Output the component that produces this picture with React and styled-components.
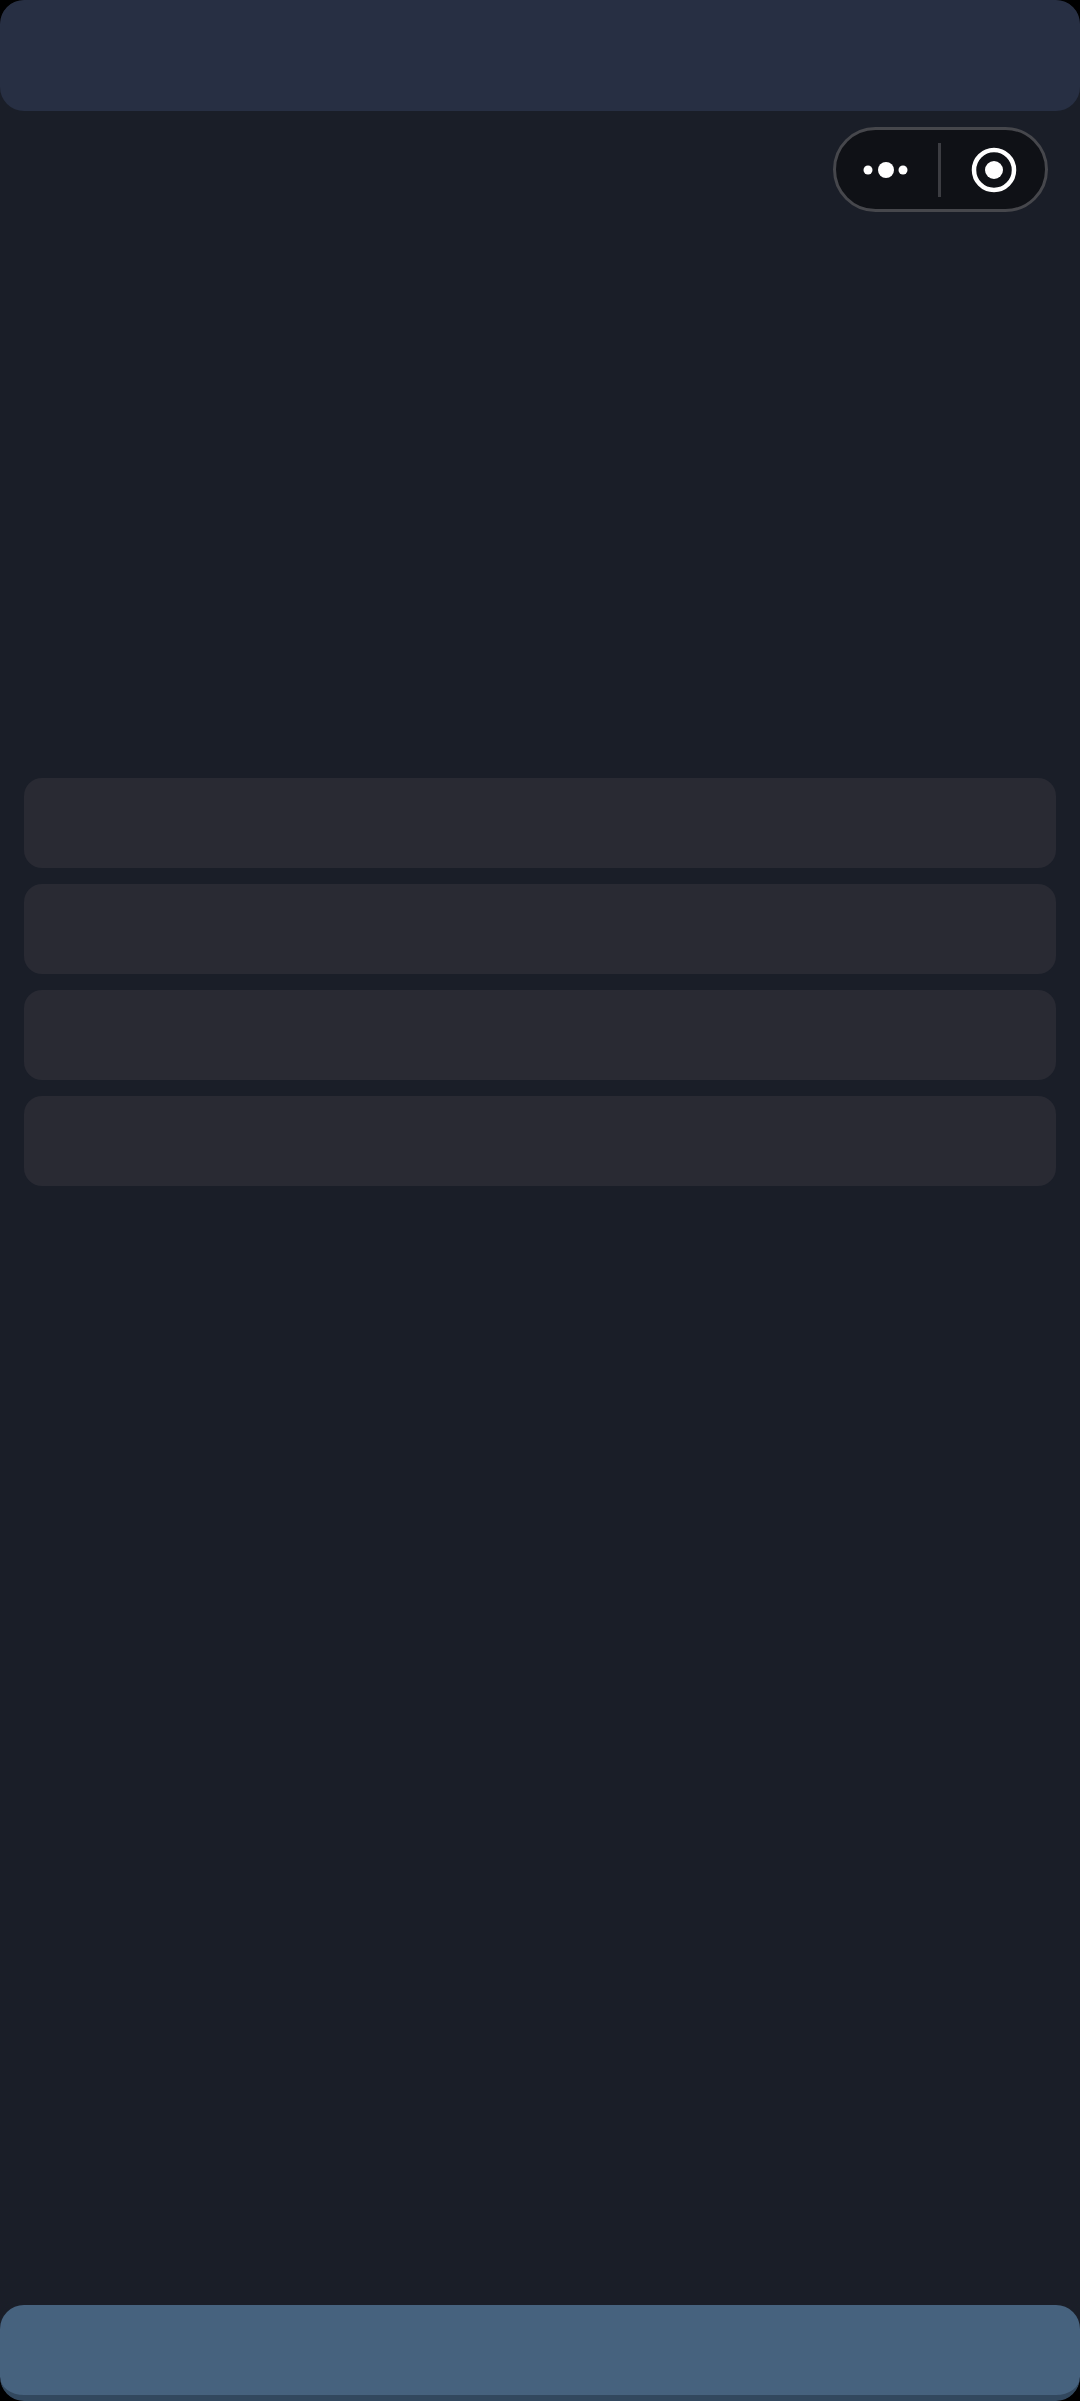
import React from "react";
import styled, { createGlobalStyle } from "styled-components";

const GlobalStyle = createGlobalStyle`
html, body {
  margin: 0;
  padding: 0;
  background: #000;
}
`;

const Page = styled.div`
  position: relative;
  width: 1080px;
  height: 2401px;
  display: flex;
  flex-direction: column;
  background: #1a1e28;
  border-radius: 24px;
  overflow: hidden;
`;

const Header = styled.div`
  height: 111px;
  flex-shrink: 0;
  background: #272f43;
  border-radius: 24px;
`;

const Capsule = styled.div`
  position: absolute;
  top: 127px;
  left: 833px;
  width: 215px;
  height: 85px;
  box-sizing: border-box;
  display: flex;
  align-items: center;
  background: #0f1116;
  border: 3px solid #46474c;
  border-radius: 43px;
`;

const CapsuleSide = styled.div`
  flex: 1;
  display: flex;
  align-items: center;
  justify-content: center;
  padding-left: ${props => props.$shift || 0}px;
`;

const Divider = styled.div`
  width: 3px;
  height: 54px;
  background: #3c3d42;
`;

const RowList = styled.div`
  margin-top: 667px;
  padding: 0 24px;
  display: flex;
  flex-direction: column;
  gap: 16px;
`;

const Row = styled.div`
  height: 90px;
  background: #292a33;
  border-radius: 18px;
`;

const Footer = styled.div`
  margin-top: auto;
  height: 96px;
  box-sizing: border-box;
  background: #46627e;
  border-bottom: 6px solid #32485e;
  border-radius: 24px;
`;

const App = () => {
  return (
    <Page>
      <GlobalStyle />
      <Header />
      <Capsule>
        <CapsuleSide>
          <svg width="48" height="20" viewBox="0 0 48 20">
            <circle cx="5" cy="10" r="4.5" fill="#fff" />
            <circle cx="23" cy="10" r="8" fill="#fff" />
            <circle cx="40" cy="10" r="4.5" fill="#fff" />
          </svg>
        </CapsuleSide>
        <Divider />
        <CapsuleSide $shift={3}>
          <svg width="46" height="46" viewBox="0 0 46 46">
            <circle cx="23" cy="23" r="20" fill="none" stroke="#fff" strokeWidth="4.5" />
            <circle cx="23" cy="23" r="9" fill="#fff" />
          </svg>
        </CapsuleSide>
      </Capsule>
      <RowList>
        <Row />
        <Row />
        <Row />
        <Row />
      </RowList>
      <Footer />
    </Page>
  );
};

export default App;
